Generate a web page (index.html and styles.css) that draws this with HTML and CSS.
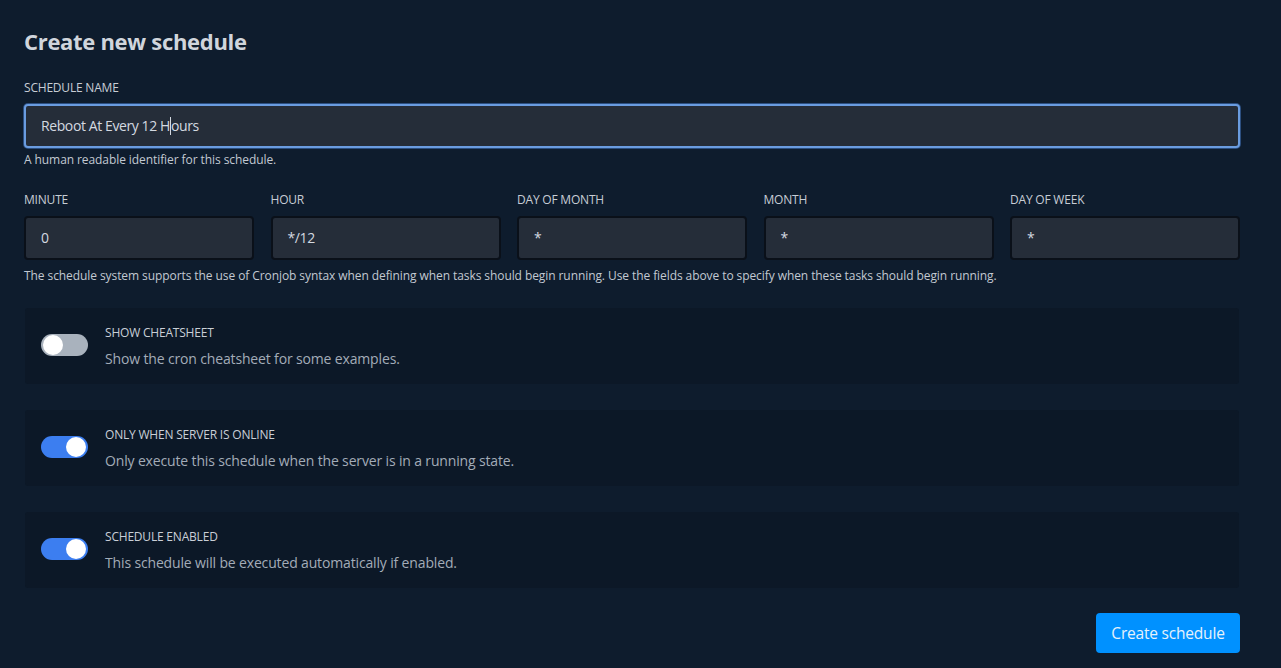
FILE: index.html
```html
<!DOCTYPE html>
<html>
<head>
<meta charset="utf-8">
<link rel="stylesheet" href="styles.css">
</head>
<body>
<div class="page">
  <h1 class="title">Create new schedule</h1>
  <div class="field">
    <label class="label">Schedule Name</label>
    <div class="input focused">Reboot At Every 12 H<span class="caret"></span>ours</div>
    <p class="help">A human readable identifier for this schedule.</p>
  </div>
  <div class="cron">
    <div class="cron-field"><label class="label">Minute</label><div class="input">0</div></div>
    <div class="cron-field"><label class="label">Hour</label><div class="input">*/12</div></div>
    <div class="cron-field"><label class="label">Day of Month</label><div class="input">*</div></div>
    <div class="cron-field"><label class="label">Month</label><div class="input">*</div></div>
    <div class="cron-field"><label class="label">Day of Week</label><div class="input">*</div></div>
  </div>
  <p class="help cron-help">The schedule system supports the use of Cronjob syntax when defining when tasks should begin running. Use the fields above to specify when these tasks should begin running.</p>
  <div class="toggles">
    <div class="toggle-box">
      <span class="switch"><span class="knob"></span></span>
      <div class="toggle-text">
        <div class="toggle-title">Show Cheatsheet</div>
        <div class="toggle-desc">Show the cron cheatsheet for some examples.</div>
      </div>
    </div>
    <div class="toggle-box">
      <span class="switch on"><span class="knob"></span></span>
      <div class="toggle-text">
        <div class="toggle-title">Only When Server Is Online</div>
        <div class="toggle-desc">Only execute this schedule when the server is in a running state.</div>
      </div>
    </div>
    <div class="toggle-box">
      <span class="switch on"><span class="knob"></span></span>
      <div class="toggle-text">
        <div class="toggle-title">Schedule Enabled</div>
        <div class="toggle-desc">This schedule will be executed automatically if enabled.</div>
      </div>
    </div>
  </div>
  <div class="actions">
    <button class="btn">Create schedule</button>
  </div>
</div>
</body>
</html>
```

FILE: styles.css
```css
html, body {
  margin: 0;
  padding: 0;
  background: #0e1c2d;
  height: 100%;
}
body {
  font-family: "Open Sans", "Noto Sans", sans-serif;
  color: #cbd2db;
}
.page {
  padding: 24px 41px 0 24px;
}
.title {
  margin: 0 0 22px;
  font-size: 22px;
  font-weight: 700;
  color: #d0d5dc;
  line-height: 34px;
  letter-spacing: -0.3px;
}
.label {
  display: block;
  font-size: 12px;
  text-transform: uppercase;
  color: #c7cdd5;
  line-height: 16px;
  margin-bottom: 8px;
  letter-spacing: -0.2px;
}
.input {
  box-sizing: border-box;
  height: 44px;
  background: #252d39;
  border: 2px solid #0a1019;
  border-radius: 4px;
  padding: 0 15px;
  font-size: 14px;
  line-height: 40px;
  color: #d4d9e0;
  letter-spacing: -0.4px;
}
.input.focused {
  border-color: #6a9ce0;
  box-shadow: 0 0 0 1px #2c4f80;
}
.caret {
  display: inline-block;
  width: 1px;
  height: 18px;
  background: #d4d9e0;
  vertical-align: middle;
  margin-top: -3px;
}
.help {
  margin: 4px 0 0;
  font-size: 12px;
  line-height: 16px;
  color: #c2c9d2;
  letter-spacing: -0.08px;
}
.cron-help {
  margin-top: 8px;
}
.field {
  margin-bottom: 24px;
}
.cron {
  display: grid;
  grid-template-columns: repeat(5, 1fr);
  column-gap: 16.5px;
}
.toggles {
  margin-top: 24px;
  display: flex;
  flex-direction: column;
  gap: 26px;
}
.toggle-box {
  margin-left: 1px;
  margin-right: 1px;
  height: 76px;
  box-sizing: border-box;
  background: #0c1827;
  border-radius: 3px;
  display: flex;
  align-items: center;
  padding: 0 16px;
  gap: 17px;
}
.switch {
  position: relative;
  width: 47px;
  height: 22px;
  border-radius: 11px;
  background: #a9b2bd;
  flex-shrink: 0;
  margin-top: -2px;
}
.switch .knob {
  position: absolute;
  top: 1px;
  left: 2px;
  width: 20px;
  height: 20px;
  border-radius: 50%;
  background: #ffffff;
}
.switch.on {
  background: #3c7ef0;
}
.switch.on .knob {
  left: auto;
  right: 2px;
}
.toggle-text {
  display: flex;
  flex-direction: column;
  margin-top: 1px;
}
.toggle-title {
  font-size: 12px;
  line-height: 16px;
  text-transform: uppercase;
  color: #c9cfd7;
  letter-spacing: -0.2px;
}
.toggle-desc {
  margin-top: 8px;
  font-size: 14px;
  line-height: 20px;
  color: #a3acb8;
  letter-spacing: -0.15px;
}
.actions {
  display: flex;
  justify-content: flex-end;
  margin-top: 25px;
}
.btn {
  width: 144px;
  height: 40px;
  background: #0091ff;
  border: none;
  border-radius: 4px;
  color: #e6f1fb;
  font-family: inherit;
  font-size: 15.5px;
  letter-spacing: -0.2px;
}
```
